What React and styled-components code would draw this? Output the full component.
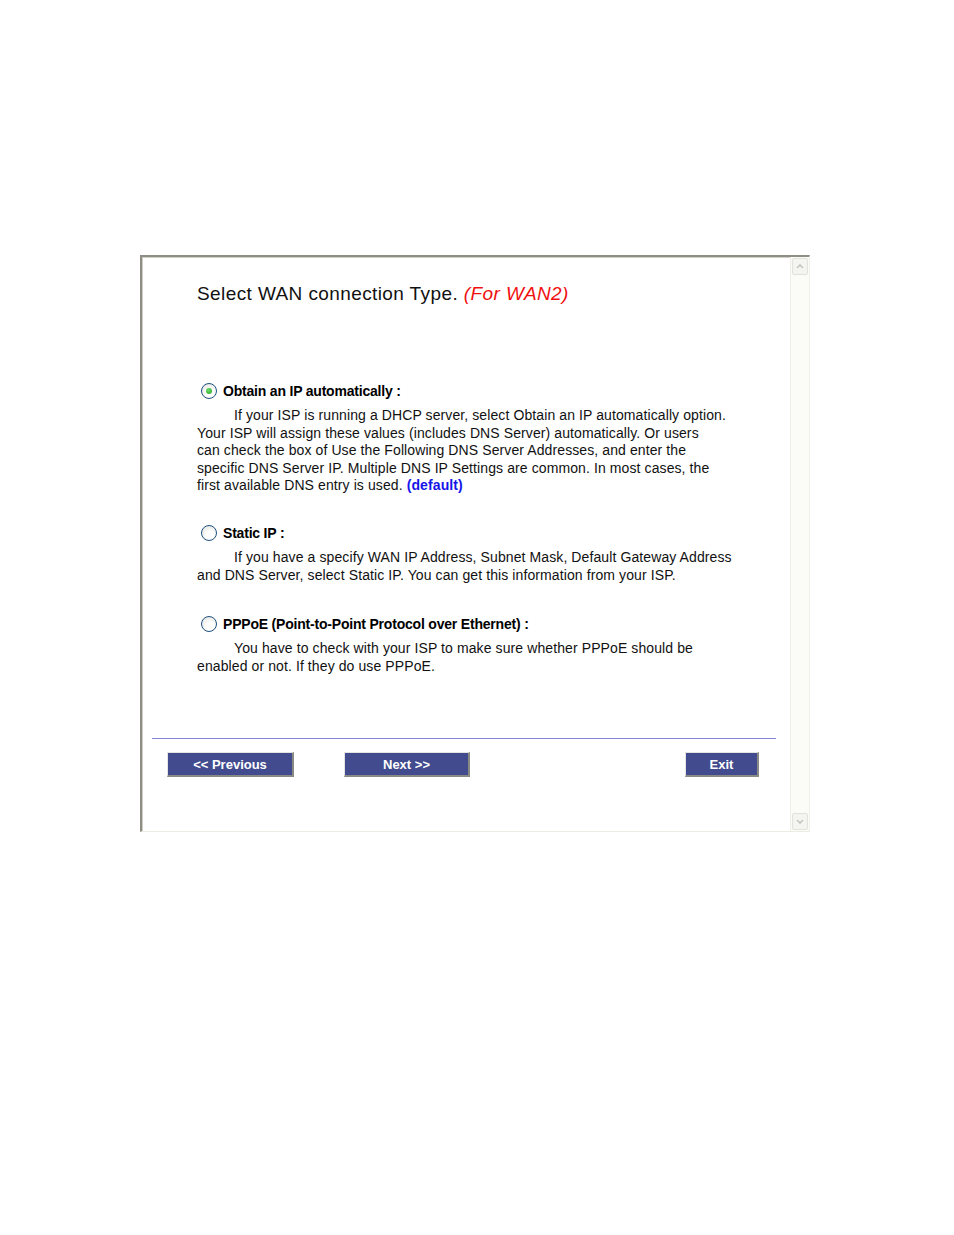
import React from 'react';
import styled, { createGlobalStyle } from 'styled-components';

const Global = createGlobalStyle`
  html, body { margin: 0; padding: 0; background: #ffffff; }
  body { font-family: "Liberation Sans", Arial, sans-serif; color: #000; }
`;

const Page = styled.div`
  width: 954px;
  height: 1235px;
  padding-top: 255px;
  padding-left: 140px;
  box-sizing: border-box;
`;

const Frame = styled.div`
  width: 670px;
  height: 577px;
  box-sizing: border-box;
  display: flex;
  border-top: 2px solid #8e8e86;
  border-left: 2px solid #8e8e86;
  border-right: 1px solid #f0f0ea;
  border-bottom: 1px solid #ecece4;
  box-shadow: inset 1px 1px 0 #cfcfc7;
  background: #fff;
`;

const Content = styled.div`
  flex: 1;
  padding: 26px 14px 0 10px;
  display: flex;
  flex-direction: column;
`;

const Body = styled.div`
  padding-left: 45px;
  width: 560px;
`;

const Title = styled.h1`
  margin: 0;
  font-size: 19px;
  line-height: 22px;
  font-weight: normal;
  letter-spacing: 0.4px;
  color: #111;
`;

const Accent = styled.span`
  color: #f01010;
  font-style: italic;
`;

const Option = styled.div`
  margin-top: ${p => p.$top}px;
`;

const OptionHead = styled.div`
  display: flex;
  align-items: center;
  height: 18px;
  padding-left: 4px;
  gap: 6px;
  font-size: 14px;
  font-weight: bold;
  letter-spacing: -0.2px;
`;

const Radio = styled.span`
  width: 14px;
  height: 14px;
  border-radius: 50%;
  border: 1px solid #1d5281;
  background: radial-gradient(circle at 60% 65%, #ffffff 30%, #dcdcd6 100%);
  display: flex;
  align-items: center;
  justify-content: center;
  &::after {
    content: '';
    width: 6px;
    height: 6px;
    border-radius: 50%;
    background: ${p => (p.$checked ? 'radial-gradient(circle at 40% 35%, #6de06d, #21a121)' : 'transparent')};
  }
`;

const Text = styled.p`
  margin: 7px 0 0;
  font-size: 14px;
  line-height: 17.6px;
  letter-spacing: 0.1px;
  color: #111;
  text-indent: 37px;
`;

const Default = styled.span`
  color: #1515e8;
  font-weight: bold;
`;

const Divider = styled.div`
  margin-top: 63px;
  height: 1px;
  background: #8585d6;
`;

const Buttons = styled.div`
  display: flex;
  margin-top: 13px;
  padding: 0 17px 0 15px;
`;

const Button = styled.button`
  width: ${p => p.$w}px;
  height: 25px;
  margin-left: ${p => p.$ml || '0'};
  padding: 0;
  background: #414b8e;
  color: #fff;
  font-family: "Liberation Sans", Arial, sans-serif;
  font-size: 13px;
  font-weight: bold;
  border-top: 1px solid #e4e4e0;
  border-left: 1px solid #e4e4e0;
  border-right: 2px solid #8a8a84;
  border-bottom: 2px solid #8a8a84;
  cursor: pointer;
`;

const Scrollbar = styled.div`
  width: 18px;
  display: flex;
  flex-direction: column;
  justify-content: space-between;
  background: #fbfbf8;
  border-left: 1px solid #efefe8;
  padding: 1px 0;
`;

const ScrollButton = styled.div`
  width: 16px;
  height: 17px;
  margin-left: 1px;
  border: 1px solid #e2e2dc;
  border-radius: 2px;
  box-sizing: border-box;
  background: #f4f4f0;
  display: flex;
  align-items: center;
  justify-content: center;
`;

const Chevron = ({ down }) => (
  <svg width="8" height="5" viewBox="0 0 8 5">
    <path d={down ? 'M1 1 L4 4 L7 1' : 'M1 4 L4 1 L7 4'} fill="none" stroke="#c6c6c0" strokeWidth="1.6" />
  </svg>
);

export default function App() {
  return (
    <Page>
      <Global />
      <Frame>
        <Content>
          <Body>
            <Title>
              Select WAN connection Type. <Accent>(For WAN2)</Accent>
            </Title>

            <Option $top={77}>
              <OptionHead><Radio $checked />Obtain an IP automatically :</OptionHead>
              <Text>
                If your ISP is running a DHCP server, select Obtain an IP automatically option.<br />
                Your ISP will assign these values (includes DNS Server) automatically. Or users<br />
                can check the box of Use the Following DNS Server Addresses, and enter the<br />
                specific DNS Server IP. Multiple DNS IP Settings are common. In most cases, the<br />
                first available DNS entry is used. <Default>(default)</Default>
              </Text>
            </Option>

            <Option $top={29}>
              <OptionHead><Radio />Static IP :</OptionHead>
              <Text>
                If you have a specify WAN IP Address, Subnet Mask, Default Gateway Address<br />
                and DNS Server, select Static IP. You can get this information from your ISP.
              </Text>
            </Option>

            <Option $top={31}>
              <OptionHead><Radio />PPPoE (Point-to-Point Protocol over Ethernet) :</OptionHead>
              <Text>
                You have to check with your ISP to make sure whether PPPoE should be<br />
                enabled or not. If they do use PPPoE.
              </Text>
            </Option>
          </Body>

          <Divider />
          <Buttons>
            <Button $w={127}>&lt;&lt; Previous</Button>
            <Button $w={126} $ml="50px">Next &gt;&gt;</Button>
            <Button $w={74} $ml="auto">Exit</Button>
          </Buttons>
        </Content>
        <Scrollbar>
          <ScrollButton><Chevron /></ScrollButton>
          <ScrollButton><Chevron down /></ScrollButton>
        </Scrollbar>
      </Frame>
    </Page>
  );
}
